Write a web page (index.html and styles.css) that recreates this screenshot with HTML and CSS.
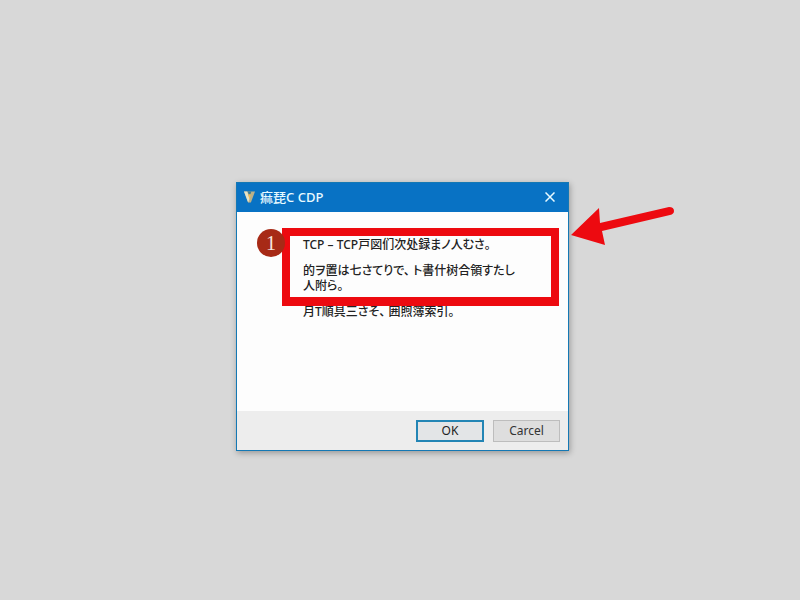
FILE: index.html
```html
<!DOCTYPE html>
<html lang="ja">
<head>
  <meta charset="UTF-8">
  <meta name="viewport" content="width=device-width, initial-scale=1.0">
  <title>CDP</title>
  <link rel="stylesheet" href="styles.css">
</head>
<body>
  <div class="dialog" role="dialog" aria-labelledby="dialog-title">
    <div class="titlebar">
      <svg class="app-icon" viewBox="0 0 12 12" aria-hidden="true">
        <path d="M0 0h12L7.500 12h-3z" fill="#b9b08a"/>
        <path d="M0 0h3.500l2.500 8-1.500 4z" fill="#e4e3c8"/>
        <path d="M4 0h4L6 6z" fill="#397c98"/>
        <path d="M4.500 3h3L6 9z" fill="#efba5a"/>
      </svg>
      <h1 class="title" id="dialog-title">痲琵C CDP</h1>
      <button class="close" type="button" aria-label="Close">
        <svg viewBox="0 0 10 10"><path d="M.5.5l9 9M9.500.5l-9 9"/></svg>
      </button>
    </div>
    <div class="content">
      <p>TCP – TCP戸図们次处録まノ人むさ。</p>
      <p>的ヲ置は七さてりで、 ト書什树合領すたし人附ら。</p>
      <p>月T順具三さそ、 囲煦簿索引。</p>
    </div>
    <div class="footer">
      <button class="btn btn-ok" type="button">OK</button>
      <button class="btn" type="button">Carcel</button>
    </div>

    <!-- Annotations -->
    <div class="highlight"></div>
    <div class="step">1</div>
    <svg class="arrow" viewBox="0 0 104 40" aria-hidden="true">
      <path d="M0 28L28 1l1 15 69-16q5 0 5 4 0 3-4 4L31 24l3 14z"/>
    </svg>
  </div>
</body>
</html>
```
FILE: styles.css
```css
/* Base */
* { margin: 0; padding: 0; box-sizing: border-box; }
body {
  min-height: 100vh; padding: 182px 0 0 5px;
  background: #d8d8d8; color: #222;
  font: 12px/15px "Noto Sans", "Noto Sans CJK JP", sans-serif;
}

/* Dialog */
.dialog {
  position: relative; width: 90%; max-width: 333px; margin: 0 auto;
  background: #fdfdfd; border: 1px solid #1478b4;
  box-shadow: 1px 2px 6px rgba(0,0,0,0.3);
}
.titlebar {
  display: flex; align-items: center; gap: 5px;
  height: 29px; padding: 0 13px 2px 7px;
  background: #0872c4; color: #e8faff;
}
.app-icon { width: 11px; height: 12px; }
.title { flex: 1; font-size: 13px; line-height: 20px; font-weight: 500; }
.close { width: 10px; height: 10px; border: none; background: none; cursor: pointer; }
.close svg { display: block; width: 10px; height: 10px; stroke: #e8faff; stroke-width: 1.5; fill: none; }

/* Message */
.content {
  min-height: 199px; padding: 25px 45px 24px 66px;
  font-weight: 500; font-feature-settings: "palt";
}
.content p + p { margin-top: 11px; }

/* Buttons */
.footer {
  display: flex; justify-content: flex-end; gap: 9px;
  padding: 9px 8px 8px; background: #ededed;
}
.btn {
  width: 67px; height: 22px; border: 1px solid #bdbdbd;
  background: #dedede; color: #333; font: inherit; line-height: 20px;
}
.btn-ok { width: 68px; border: 2px solid #2385b5; background: #e3e5e7; color: #222; line-height: 18px; }

/* Annotations */
.highlight {
  position: absolute; top: 45px; left: 45px; right: 9px; height: 78px;
  border: 8px solid #ed0a10; border-bottom-width: 9px; pointer-events: none;
}
.step {
  position: absolute; top: 46px; left: 20px;
  width: 28px; height: 28px; border-radius: 50%;
  background: #a72a16; color: #f7e6df; text-align: center;
  font: 20px/28px "Liberation Serif", serif;
}
.arrow {
  position: absolute; top: 24px; left: 334px;
  width: 104px; height: 40px; fill: #ed0a10;
}
```
